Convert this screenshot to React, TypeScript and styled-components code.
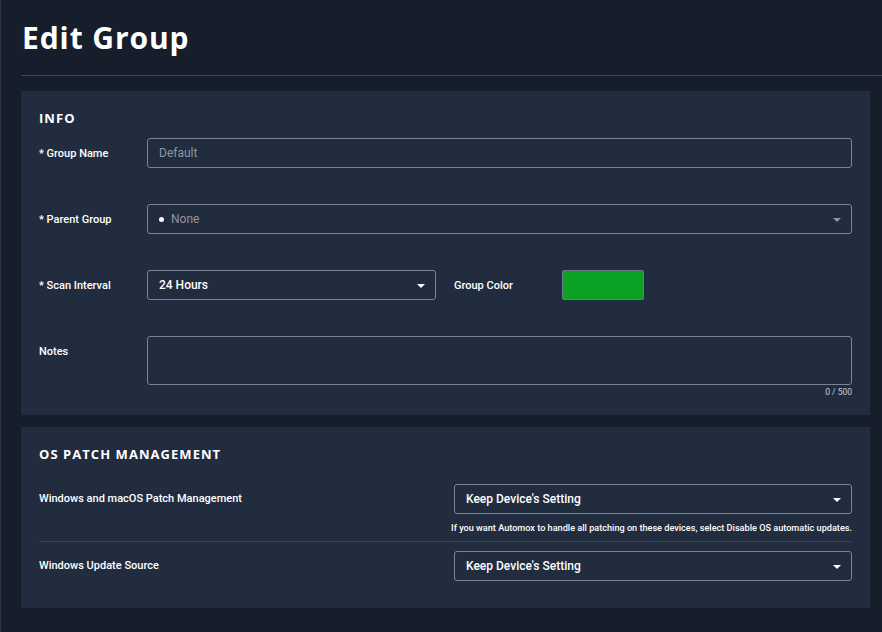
import React from "react";
import styled, { createGlobalStyle } from "styled-components";

const Global = createGlobalStyle`
  html, body { margin: 0; padding: 0; background: #161e2c; }
  body { font-family: Roboto, "Liberation Sans", sans-serif; color: #ffffff; }
  * { box-sizing: border-box; }
`;

const Page = styled.div`
  min-height: 632px;
  border-left: 1px solid #2b3242;
  padding: 0 0 20px 20px;
`;

const Header = styled.header`
  height: 76px;
  border-bottom: 1px solid #3b4456;
  padding-top: 19px;
`;

const Title = styled.h1`
  margin: 0;
  font-family: "Open Sans", Lato, sans-serif;
  font-weight: 700;
  font-size: 30px;
  line-height: 38px;
  letter-spacing: 0.9px;
  padding-left: 1px;
`;

const Card = styled.section<{ $pb: number }>`
  background: #212c3f;
  margin: 15px 12px 0 0;
  padding: 18px 18px ${(p) => p.$pb}px 18px;
  & + & { margin-top: 12px; }
`;

const CardTitle = styled.h2<{ $mb: number }>`
  margin: 0 0 ${(p) => p.$mb}px 0;
  font-family: "Open Sans", Lato, sans-serif;
  font-weight: 700;
  font-size: 13px;
  line-height: 18px;
  letter-spacing: 1.05px;
`;

const FormGrid = styled.div`
  display: flex;
  flex-direction: column;
  gap: 36px;
`;

const FieldRow = styled.div`
  display: grid;
  grid-template-columns: 108px 1fr;
  align-items: start;
`;

const Label = styled.label`
  display: block;
  height: 30px;
  font-size: 11px;
  font-weight: 500;
  line-height: 31px;
  color: #ffffff;
  white-space: nowrap;
`;

const Box = styled.div<{ $muted?: boolean }>`
  position: relative;
  height: 30px;
  border: 1px solid #7b8494;
  border-radius: 3px;
  display: flex;
  align-items: center;
  padding: 0 11px;
  font-size: 12px;
  font-weight: ${(p) => (p.$muted ? 400 : 500)};
  color: ${(p) => (p.$muted ? "#8e96a3" : "#ffffff")};
`;

const Arrow = styled.span<{ $muted?: boolean }>`
  position: absolute;
  right: 10px;
  top: 13px;
  width: 0;
  height: 0;
  border-left: 4px solid transparent;
  border-right: 4px solid transparent;
  border-top: 4px solid ${(p) => (p.$muted ? "#8e96a3" : "#ffffff")};
`;

const Dot = styled.span`
  width: 5px;
  height: 5px;
  border-radius: 50%;
  background: #ffffff;
  margin-right: 7px;
`;

const SplitRow = styled.div`
  display: grid;
  grid-template-columns: 289px 90px 82px;
  column-gap: 18px;
  align-items: start;
`;

const Swatch = styled.div<{ $color: string }>`
  height: 30px;
  border: 1px solid #6f7886;
  border-radius: 2px;
  background: ${(p) => p.$color};
`;

const TextArea = styled.div`
  height: 49px;
  border: 1px solid #7b8494;
  border-radius: 3px;
`;

const Counter = styled.div`
  text-align: right;
  font-size: 8.5px;
  line-height: 12px;
  margin-top: 1px;
  color: #c9ced6;
`;

const PatchRow = styled.div<{ $pt: number }>`
  display: grid;
  grid-template-columns: 1fr 398px;
  align-items: start;
  padding-top: ${(p) => p.$pt}px;
`;

const PatchLabel = styled.div`
  font-size: 11px;
  font-weight: 500;
  line-height: 29px;
`;

const Helper = styled.div`
  grid-column: 1 / -1;
  text-align: right;
  font-size: 9.15px;
  font-weight: 500;
  line-height: 12px;
  margin-top: 8px;
  margin-bottom: 7px;
  white-space: nowrap;
`;

const Divider = styled.hr`
  border: 0;
  border-top: 1px solid #3b4456;
  margin: 0;
`;

function Select({ value, muted, dot }: { value: string; muted?: boolean; dot?: boolean }) {
  return (
    <Box $muted={muted}>
      {dot && <Dot />}
      {value}
      <Arrow $muted={muted} />
    </Box>
  );
}

export default function App() {
  return (
    <>
      <Global />
      <Page>
        <Header>
          <Title>Edit Group</Title>
        </Header>

        <Card $pb={17}>
          <CardTitle $mb={11}>INFO</CardTitle>
          <FormGrid>
            <FieldRow>
              <Label>* Group Name</Label>
              <Box $muted>Default</Box>
            </FieldRow>
            <FieldRow>
              <Label>* Parent Group</Label>
              <Select value="None" muted dot />
            </FieldRow>
            <FieldRow>
              <Label>* Scan Interval</Label>
              <SplitRow>
                <Select value="24 Hours" />
                <Label>Group Color</Label>
                <Swatch $color="#0aa125" />
              </SplitRow>
            </FieldRow>
            <FieldRow>
              <Label>Notes</Label>
              <div>
                <TextArea />
                <Counter>0 / 500</Counter>
              </div>
            </FieldRow>
          </FormGrid>
        </Card>

        <Card $pb={27}>
          <CardTitle $mb={21}>OS PATCH MANAGEMENT</CardTitle>
          <PatchRow $pt={0}>
            <PatchLabel>Windows and macOS Patch Management</PatchLabel>
            <Select value="Keep Device's Setting" />
            <Helper>
              If you want Automox to handle all patching on these devices, select Disable OS automatic updates.
            </Helper>
          </PatchRow>
          <Divider />
          <PatchRow $pt={9}>
            <PatchLabel>Windows Update Source</PatchLabel>
            <Select value="Keep Device's Setting" />
          </PatchRow>
        </Card>
      </Page>
    </>
  );
}
